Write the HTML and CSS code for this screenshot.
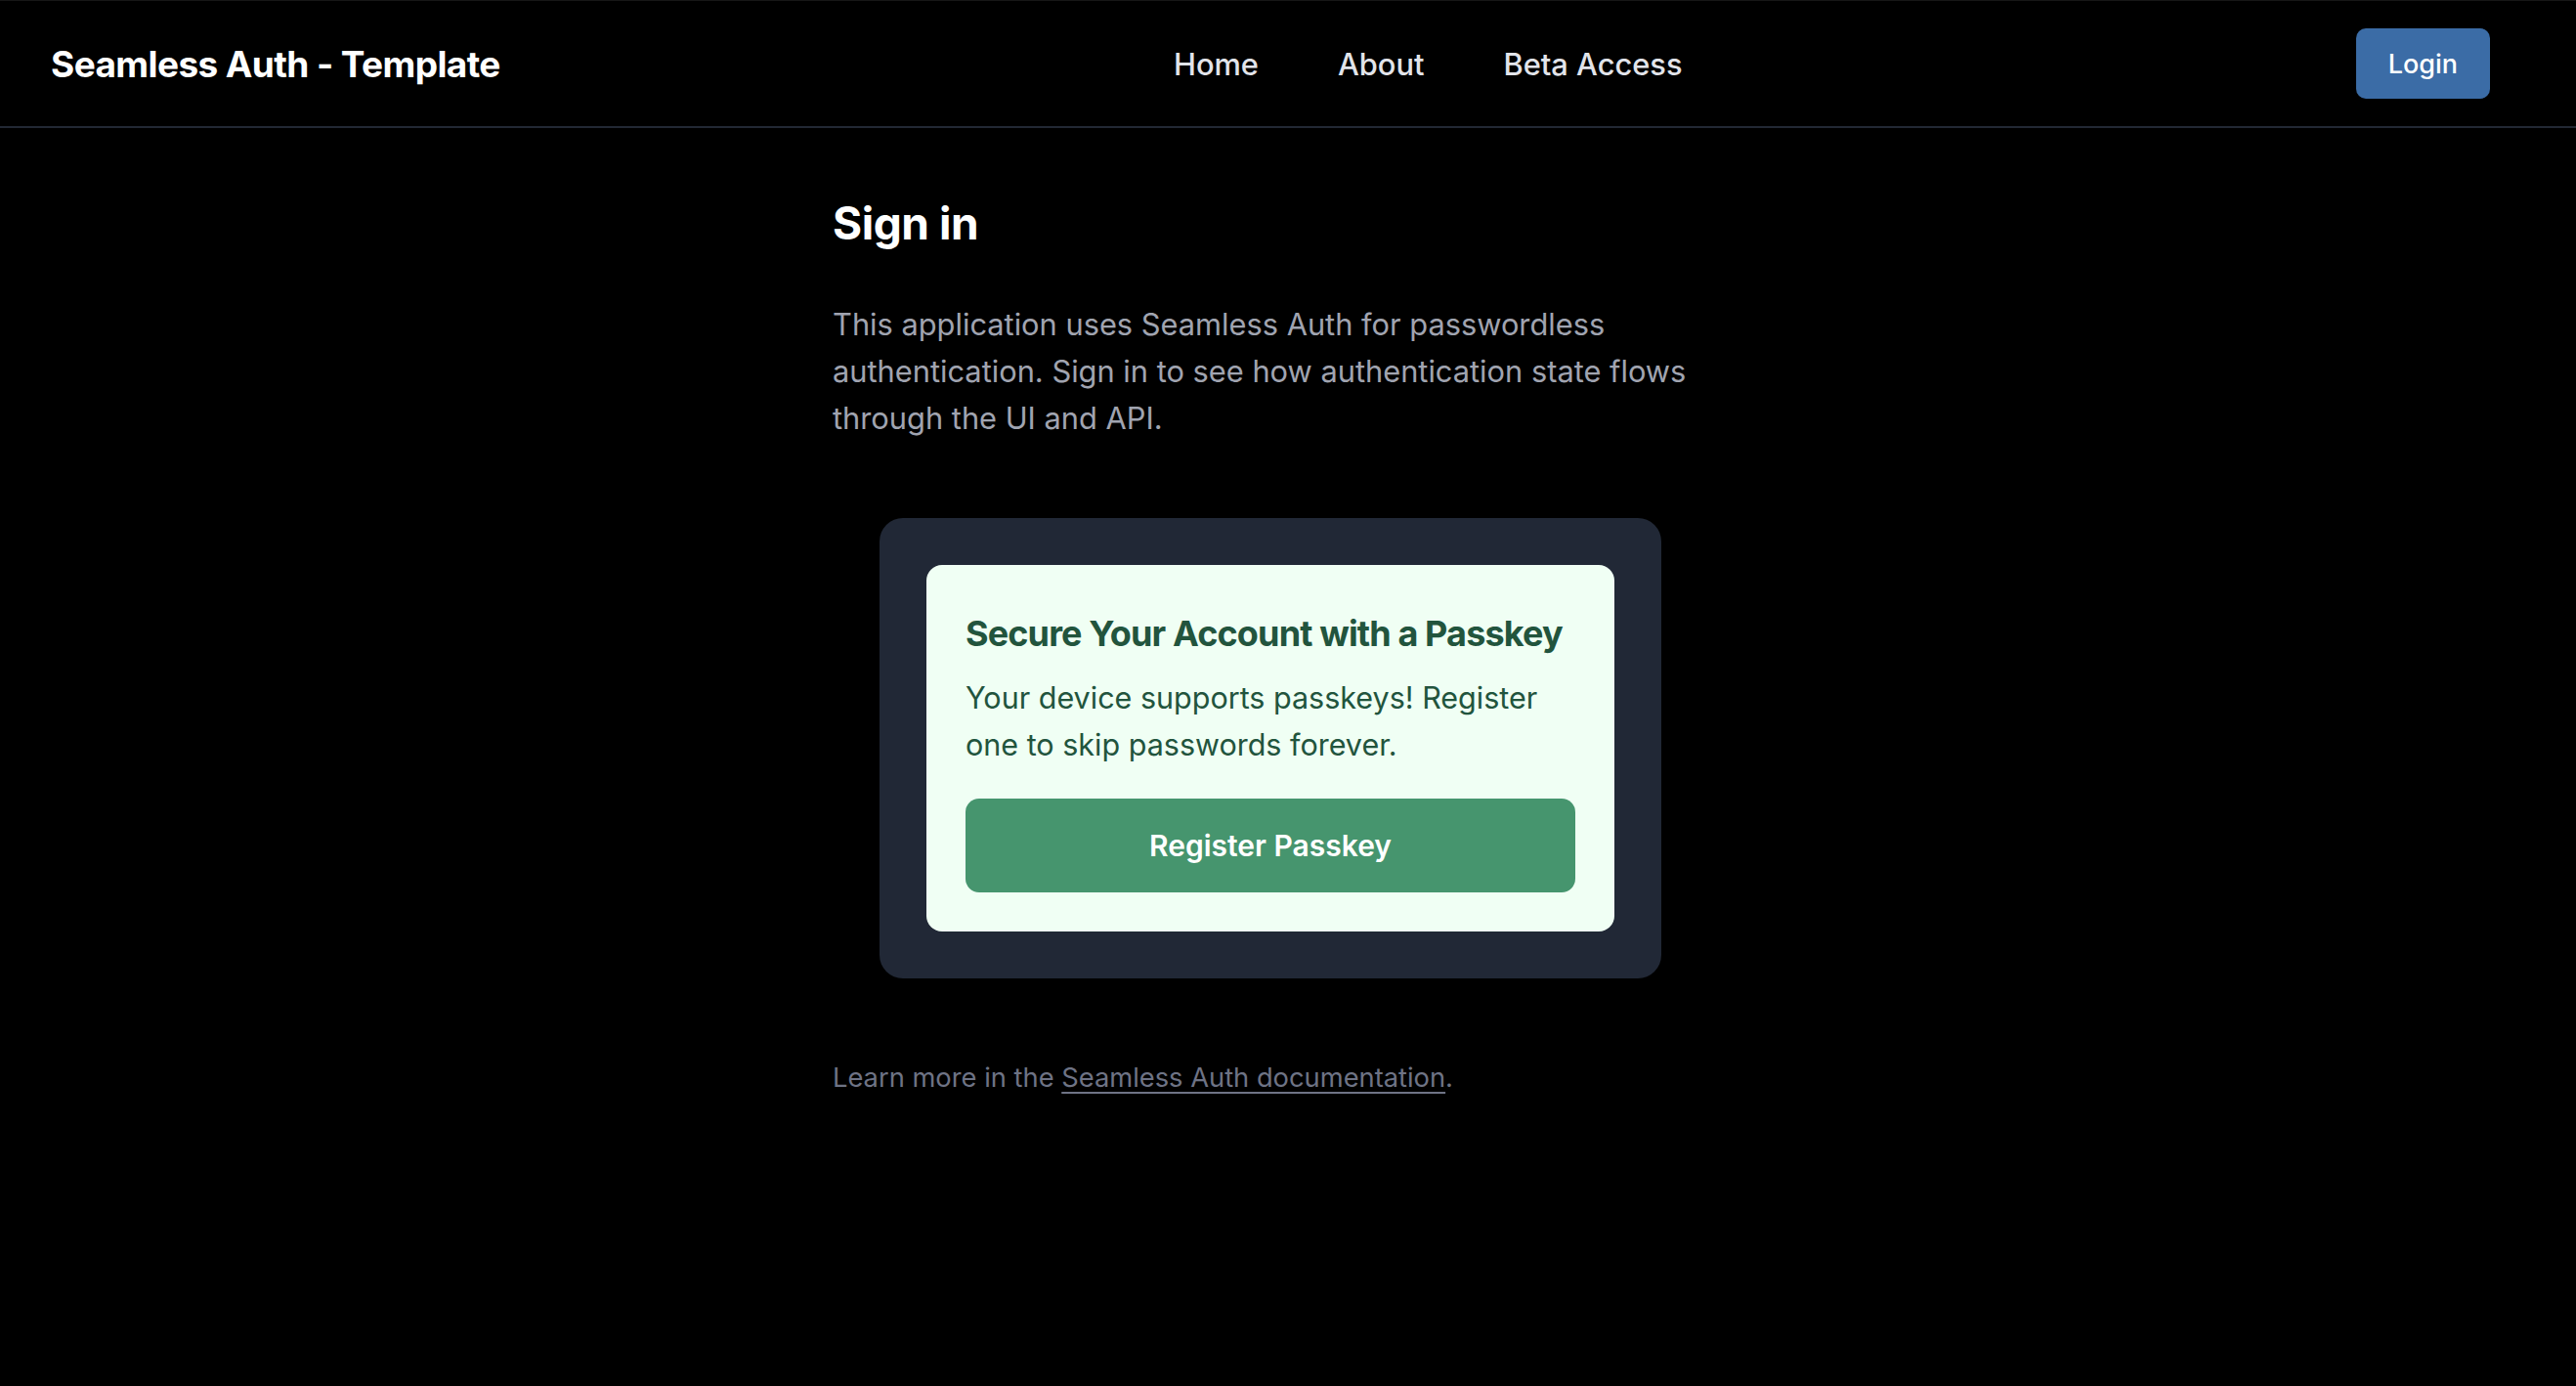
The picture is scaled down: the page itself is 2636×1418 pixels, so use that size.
FILE: index.html
```html
<!DOCTYPE html>
<html lang="en">
  <head>
    <meta charset="UTF-8" />
    <meta name="viewport" content="width=device-width, initial-scale=1.0" />
    <title>Sign in - Seamless Auth</title>
    <link rel="stylesheet" href="styles.css">
  </head>
  <body>
    <header class="topbar">
      <a class="brand" href="#">Seamless Auth - Template</a>
      <nav class="nav-links">
        <a href="#">Home</a>
        <a href="#">About</a>
        <a href="#">Beta Access</a>
      </nav>
      <button class="btn-login">Login</button>
    </header>

    <main class="page">
      <div class="content">
        <h1>Sign in</h1>
        <p class="intro">
          This application uses Seamless Auth for passwordless
          authentication. Sign in to see how authentication state flows
          through the UI and API.
        </p>

        <div class="auth-panel">
          <div class="passkey-card">
            <h2>Secure Your Account with a Passkey</h2>
            <p>Your device supports passkeys! Register one to skip passwords forever.</p>
            <button class="btn-passkey">Register Passkey</button>
          </div>
        </div>

        <p class="footnote">
          Learn more in the <a href="#">Seamless Auth documentation</a>.
        </p>
      </div>
    </main>
  </body>
</html>
```

FILE: styles.css
```css
body {
  margin: 0;
  background-color: #000000;
  color: #ffffff;
  font-family: Inter, "Noto Sans", Arial, sans-serif;
  min-height: 100vh;
  border-top: 1px solid #161616;
}
a {
  color: inherit;
  text-decoration: none;
}
button {
  font-family: inherit;
  border: none;
  cursor: pointer;
}

.topbar {
  display: flex;
  justify-content: space-between;
  align-items: center;
  height: 128px;
  padding: 0 88px 0 52px;
  border-bottom: 2px solid #222834;
}
.brand {
  font-size: 37px;
  font-weight: 700;
  letter-spacing: -0.016em;
  color: #ffffff;
}
.nav-links {
  display: flex;
  gap: 81px;
  padding-top: 1px;
}
.nav-links a {
  font-size: 30.8px;
  font-weight: 500;
  color: #e2e4ea;
}
.btn-login {
  height: 72px;
  padding: 0 33px;
  font-size: 27px;
  font-weight: 500;
  color: #ffffff;
  background-color: #3b6ca6;
  border-radius: 10px;
}

.page {
  padding-right: 36px;
}
.content {
  max-width: 896px;
  margin: 0 auto;
}
.content h1 {
  margin: 70px 0 0;
  font-size: 46px;
  line-height: 1.2;
  font-weight: 700;
  letter-spacing: -0.01em;
}
.intro {
  margin: 52px 0 0;
  font-size: 30.8px;
  line-height: 48px;
  color: #a0a4b0;
}

.auth-panel {
  width: 800px;
  box-sizing: border-box;
  margin: 78px auto 0;
  padding: 48px;
  background-color: #212836;
  border-radius: 24px;
}
.passkey-card {
  padding: 40px;
  background-color: #f0fff4;
  border-radius: 16px;
  color: #22543d;
}
.passkey-card h2 {
  margin: 3px 0 0;
  font-size: 36px;
  line-height: 54px;
  font-weight: 700;
  letter-spacing: -0.024em;
  white-space: nowrap;
}
.passkey-card p {
  margin: 15px 0 0;
  font-size: 30.5px;
  line-height: 48px;
}
.btn-passkey {
  display: block;
  width: 100%;
  height: 96px;
  margin-top: 31px;
  font-size: 30px;
  font-weight: 600;
  color: #ffffff;
  background-color: #46956e;
  border-radius: 14px;
}

.footnote {
  margin: 82px 0 0;
  font-size: 27.3px;
  line-height: 1.5;
  color: #6e7385;
}
.footnote a {
  text-decoration: underline;
  text-underline-offset: 5px;
}
```
